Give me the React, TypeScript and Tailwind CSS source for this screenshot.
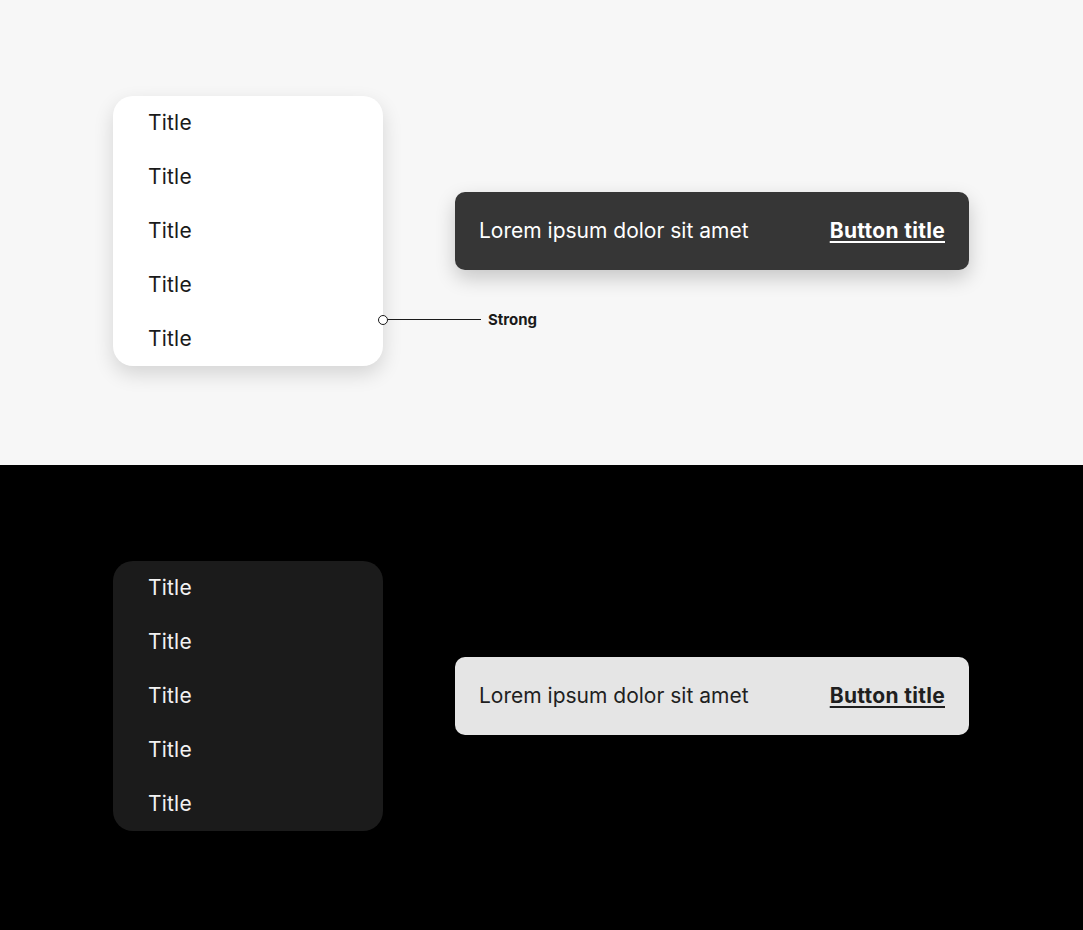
const items = ["Title", "Title", "Title", "Title", "Title"];

function Menu({ dark }: { dark?: boolean }) {
  return (
    <div
      className={
        "relative w-[270px] rounded-[20px] " +
        (dark
          ? "bg-[#1b1b1b] text-[#f2f2f2]"
          : "bg-white text-[#1a1a1a] shadow-[0_8px_20px_rgba(0,0,0,0.14)]")
      }
    >
      {items.map((t, i) => (
        <div key={i} className="flex h-[54px] items-center pl-[35px] pt-[1px] text-[21px] tracking-[0.2px]">
          {t}
        </div>
      ))}
      {!dark && (
        <div className="absolute left-[265px] top-[213px] flex items-center">
          <div className="h-[10px] w-[10px] rounded-full border-[1.5px] border-[#1a1a1a] bg-white" />
          <div className="h-px w-[93px] bg-[#1a1a1a]" />
          <span className="ml-[7px] text-[15px] font-bold text-[#1a1a1a]">Strong</span>
        </div>
      )}
    </div>
  );
}

function Snackbar({ dark }: { dark?: boolean }) {
  return (
    <div
      className={
        "flex h-[78px] w-[514px] items-center justify-between rounded-[10px] px-6 pt-[1px] text-[21px] " +
        (dark
          ? "bg-[#e5e5e5] text-[#1f1f1f]"
          : "bg-[#363636] text-white shadow-[0_8px_20px_rgba(0,0,0,0.2)]")
      }
    >
      <span>Lorem ipsum dolor sit amet</span>
      <span className="font-bold tracking-[0.3px] underline underline-offset-[3px]">Button title</span>
    </div>
  );
}

export default function App() {
  return (
    <div className="font-['Inter',sans-serif]">
      <div className="flex h-[465px] items-center gap-[72px] bg-[#f7f7f7] pb-[4px] pl-[113px]">
        <Menu />
        <Snackbar />
      </div>
      <div className="flex h-[465px] items-center gap-[72px] bg-black pb-[4px] pl-[113px]">
        <Menu dark />
        <Snackbar dark />
      </div>
    </div>
  );
}
